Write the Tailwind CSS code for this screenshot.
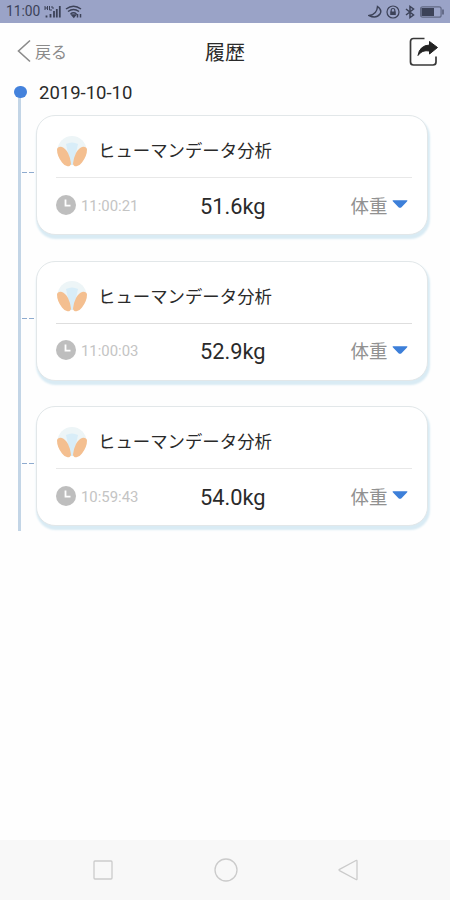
<!DOCTYPE html>
<html lang="ja">
<head>
  <meta charset="UTF-8" />
  <meta name="viewport" content="width=device-width, initial-scale=1.0"/>
  <title>履歴</title>
  <script src="https://cdn.jsdelivr.net/npm/@tailwindcss/browser@4"></script>
</head>
<body class="bg-[#fefefe] font-[Roboto,'Noto_Sans_CJK_JP',sans-serif] text-[#2a2a2a]">
  <!-- Shared icons -->
  <svg class="hidden">
    <symbol id="scale" viewBox="0 0 32 32">
      <circle cx="16" cy="15.500" r="14.500" fill="#edf5f7"/>
      <path d="M10 9Q16 6 22 9L17.500 30H14.500Z" fill="#d8edf8"/>
      <path d="M1 14.500Q1.500 11.500 5 11.800Q9.500 13 12 18Q14.500 23 15 28.500Q14.800 31.500 11.500 31.300Q8.500 31 6 27.500Q1 21 1 14.500Z" fill="#f4bf90"/>
      <path d="M31 14.500Q30.500 11.500 27 11.800Q22.500 13 20 18Q17.500 23 17 28.500Q17.200 31.500 20.500 31.300Q23.500 31 26 27.500Q31 21 31 14.500Z" fill="#f4bf90"/>
    </symbol>
    <symbol id="clock" viewBox="0 0 20 20">
      <circle cx="10" cy="10" r="10" fill="#bebebe"/>
      <path d="M9.500 4.500V10.700H14.500" fill="none" stroke="#fff" stroke-width="1.800"/>
    </symbol>
    <symbol id="caret" viewBox="0 0 16 8">
      <path d="M1 .2H15Q15.900 .5 15 1.400L9.500 7.200Q8 8.400 6.500 7.200L1 1.400Q.1 .5 1 .2Z" fill="#3d7fd9"/>
    </symbol>
  </svg>

  <div class="flex h-[900px] w-[450px] flex-col overflow-hidden">
    <!-- Status bar -->
    <div class="flex h-[23px] shrink-0 items-center bg-[#9aa3c7] pl-[6px] pr-[4px] pt-px text-[#3c4258]">
      <span class="w-[38px] whitespace-nowrap text-[13.8px] leading-none">11:00</span>
      <svg class="h-[14px] w-[17px]" viewBox="0 0 17 14" fill="none" stroke="currentColor">
        <path d="M2.500 10.500V12.500M6.500 9V12.500M10 6V12.500M12.800 4V12.500" stroke-width="1.800"/>
        <path d="M15.800 1V12.500" stroke-width="1.800"/>
        <path d="M1 1V5M3.500 1V5M1 3H3.500M5.500 1V5H8M8 1V3H10" stroke-width="1"/>
      </svg>
      <svg class="ml-[4px] h-[14px] w-[18px]" viewBox="0 0 18 14" fill="none" stroke="currentColor" stroke-width="1.500">
        <path d="M1 4Q8.500-1.500 16 4M3 6.500Q8.500 2.500 14 6.500M5.500 9Q8.500 6.500 11.500 9"/>
        <path d="M7 10H10.500L8.800 12ZM12.500 9V12.500M15.500 9V12.500"/>
      </svg>
      <div class="ml-auto flex items-center">
        <svg class="h-[14px] w-[14px]" viewBox="0 0 14 14" fill="none" stroke="currentColor" stroke-width="1.400">
          <path d="M9.500 1.500Q14.500 5 12 9Q8 14 1 10.500Q9 9.500 9.500 1.500Z"/>
        </svg>
        <svg class="ml-[4px] h-[14px] w-[14px]" viewBox="0 0 14 14" fill="none" stroke="currentColor">
          <circle cx="7" cy="7" r="6" stroke-width="1.200"/>
          <path d="M5.200 7V5Q5.200 3.500 7 3.500Q8.800 3.500 8.800 5V7" stroke-width="1.200"/>
          <path d="M4.200 6.500H9.800V10H4.200Z" fill="currentColor" stroke="none"/>
        </svg>
        <svg class="ml-[4px] h-[14px] w-[12px]" viewBox="0 0 12 14" fill="none" stroke="currentColor" stroke-width="1.500">
          <path d="M2 4L9.500 10L6 12.500V1.500L9.500 4L2 10"/>
        </svg>
        <svg class="ml-[3px] h-[12px] w-[27px]" viewBox="0 0 27 12" fill="none" stroke="currentColor">
          <rect x="1.600" y=".8" width="20.500" height="10.400" rx="2" stroke-width="1.200" stroke-opacity=".6"/>
          <path d="M2.500 2H15V10H2.500Z" fill="currentColor" stroke="none"/>
          <path d="M24 3.500V8.500" stroke-width="1.600" stroke-opacity=".7"/>
        </svg>
      </div>
    </div>

    <!-- Header -->
    <header class="grid h-[57px] shrink-0 grid-cols-3 items-center pl-[17px] pr-[11px]">
      <div class="flex items-center text-[#8b8b8b]">
        <svg class="-mt-px h-[24px] w-[15px]" viewBox="0 0 15 24" fill="none" stroke="currentColor" stroke-width="1.600">
          <path d="M13 1.500L1.500 12L13 22.500"/>
        </svg>
        <span class="ml-[3px] pt-[2px] text-[16px] leading-none">戻る</span>
      </div>
      <h1 class="-ml-[6px] pt-[2px] text-center text-[20px] leading-none">履歴</h1>
      <svg class="ml-auto h-[30px] w-[30px]" viewBox="0 0 30 30" fill="none" stroke="#383838" stroke-width="1.700">
        <path d="M15.500 1.500H4.500Q1.500 1.500 1.500 4.500V25Q1.500 28 4.500 28H24Q27 28 27 25V19.500"/>
        <path d="M20.500 4.500L28.500 10.500L20.500 17V14Q13 12.500 9 18.500Q10.500 8.500 20.500 8Z" fill="#222" stroke="#222" stroke-width="1"/>
      </svg>
    </header>

    <!-- Timeline -->
    <main class="relative flex-1">
      <div class="absolute left-[18px] top-[12px] h-[439px] w-[3px] bg-[#c3d5e6]"></div>
      <div class="absolute left-[14px] top-[6px] h-[12px] w-[13px] rounded-full bg-[#4482dc]"></div>
      <h2 class="h-[35px] pl-[39px] pt-[3px] text-[18.5px] leading-[20px]">2019-10-10</h2>

      <div class="flex flex-col gap-[25.5px] pl-[36px] pr-[22.5px]">
        <section class="relative h-[120px] rounded-[19px] border border-[#e2e7e9] bg-white pl-[19px] pr-[15px] shadow-[1px_3px_2px_1px_#d9ebf4]">
          <div class="absolute -left-[15px] top-[56px] flex gap-[2px]"><i class="h-px w-[5px] bg-[#8eabcf]"></i><i class="h-px w-[5px] bg-[#8eabcf]"></i></div>
          <div class="flex h-[62px] items-center border-b border-[#e8e8e8] pt-[9px]">
            <svg class="-mt-px h-[32px] w-[32px]"><use href="#scale"/></svg>
            <span class="ml-[10px] pt-[2px] text-[17.4px] leading-none">ヒューマンデータ分析</span>
          </div>
          <div class="flex h-[55px] items-center">
            <svg class="-mt-[2px] h-[20px] w-[20px]"><use href="#clock"/></svg>
            <span class="ml-[5px] w-[119px] pt-px text-[14.9px] leading-none text-[#c4c4c4]">11:00:21</span>
            <span class="pt-[2px] text-[21.8px] leading-none">51.6kg</span>
            <span class="ml-auto pt-[3px] text-[18.5px] leading-none text-[#919191]">体重</span>
            <svg class="-mt-[3px] ml-[4px] mr-[4px] h-[8px] w-[16px]"><use href="#caret"/></svg>
          </div>
        </section>

        <section class="relative h-[120px] rounded-[19px] border border-[#e2e7e9] bg-white pl-[19px] pr-[15px] shadow-[1px_3px_2px_1px_#d9ebf4]">
          <div class="absolute -left-[15px] top-[56px] flex gap-[2px]"><i class="h-px w-[5px] bg-[#8eabcf]"></i><i class="h-px w-[5px] bg-[#8eabcf]"></i></div>
          <div class="flex h-[62px] items-center border-b border-[#dedede] pt-[9px]">
            <svg class="-mt-px h-[32px] w-[32px]"><use href="#scale"/></svg>
            <span class="ml-[10px] pt-[2px] text-[17.4px] leading-none">ヒューマンデータ分析</span>
          </div>
          <div class="flex h-[55px] items-center">
            <svg class="-mt-[2px] h-[20px] w-[20px]"><use href="#clock"/></svg>
            <span class="ml-[5px] w-[119px] pt-px text-[14.9px] leading-none text-[#c4c4c4]">11:00:03</span>
            <span class="pt-px text-[21.8px] leading-none">52.9kg</span>
            <span class="ml-auto pt-[2px] text-[18.5px] leading-none text-[#919191]">体重</span>
            <svg class="-mt-[3px] ml-[4px] mr-[4px] h-[8px] w-[16px]"><use href="#caret"/></svg>
          </div>
        </section>

        <section class="relative h-[120px] rounded-[19px] border border-[#e2e7e9] bg-white pl-[19px] pr-[15px] shadow-[1px_3px_2px_1px_#d9ebf4]">
          <div class="absolute -left-[15px] top-[56px] flex gap-[2px]"><i class="h-px w-[5px] bg-[#8eabcf]"></i><i class="h-px w-[5px] bg-[#8eabcf]"></i></div>
          <div class="flex h-[62px] items-center border-b border-[#e8e8e8] pt-[9px]">
            <svg class="-mt-px h-[32px] w-[32px]"><use href="#scale"/></svg>
            <span class="ml-[10px] pt-[2px] text-[17.4px] leading-none">ヒューマンデータ分析</span>
          </div>
          <div class="flex h-[55px] items-center">
            <svg class="-mt-[2px] h-[20px] w-[20px]"><use href="#clock"/></svg>
            <span class="ml-[5px] w-[119px] pt-px text-[14.9px] leading-none text-[#c4c4c4]">10:59:43</span>
            <span class="pt-[2px] text-[21.8px] leading-none">54.0kg</span>
            <span class="ml-auto pt-[3px] text-[18.5px] leading-none text-[#919191]">体重</span>
            <svg class="-mt-[3px] ml-[4px] mr-[4px] h-[8px] w-[16px]"><use href="#caret"/></svg>
          </div>
        </section>
      </div>
    </main>

    <!-- Navigation bar -->
    <nav class="flex h-[60px] shrink-0 items-center justify-between bg-[#f8f8f8] pl-[93px] pr-[92px] text-[#cbcbcb]">
      <svg class="h-[20px] w-[20px]" viewBox="0 0 20 20" fill="none" stroke="currentColor" stroke-width="1.300"><rect x="1" y="1" width="18" height="18" rx="1"/></svg>
      <svg class="h-[24px] w-[24px]" viewBox="0 0 24 24" fill="none" stroke="currentColor" stroke-width="1.300"><circle cx="12" cy="12" r="11"/></svg>
      <svg class="h-[22px] w-[20px]" viewBox="0 0 20 22" fill="none" stroke="currentColor" stroke-width="1.300" stroke-linejoin="round"><path d="M18 1.500Q19 1 19 2V20Q19 21 18 20.500L1.500 11.600Q.5 11 1.500 10.400Z"/></svg>
    </nav>
  </div>
</body>
</html>
